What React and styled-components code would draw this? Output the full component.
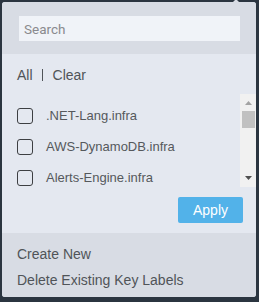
import React, { useEffect, useRef } from "react";
import styled, { createGlobalStyle } from "styled-components";

const Global = createGlobalStyle`
  html, body { margin: 0; padding: 0; }
  body {
    background: #2b3540;
    font-family: "Liberation Sans", Arial, sans-serif;
  }
  #root { padding: 2px 3px 0 2px; }
`;

const Popup = styled.div`
  position: relative;
  width: 254px;
  border-radius: 3px;
  background: #e4e8f0;
  overflow: visible;
  &::before {
    content: "";
    position: absolute;
    top: -3px;
    right: 17px;
    border-left: 3px solid transparent;
    border-right: 3px solid transparent;
    border-bottom: 3px solid #d8dce4;
  }
`;

const SearchSection = styled.div`
  background: #d8dce4;
  border-radius: 3px 3px 0 0;
  padding: 14px 16px 13px 17px;
`;

const SearchInput = styled.input`
  display: block;
  box-sizing: border-box;
  width: 221px;
  height: 25px;
  border: none;
  outline: none;
  background: #f0f3f8;
  padding: 0 0 0 5px;
  font-family: Roboto, "Liberation Sans", sans-serif;
  font-size: 13.5px;
  color: #333;
  caret-color: #3434c4;
  &::placeholder { color: #8a8a8e; }
`;

const Body = styled.div`
  padding: 13px 0 10px 0;
  display: flex;
  flex-direction: column;
`;

const LinkRow = styled.div`
  display: flex;
  align-items: center;
  padding-left: 15px;
  height: 16px;
  font-size: 14px;
  line-height: 16px;
  color: #505458;
`;

const LinkText = styled.span`
  cursor: pointer;
`;

const Divider = styled.span`
  width: 1px;
  height: 12px;
  background: #505458;
  margin: 0 10px 0 9px;
`;

const ListArea = styled.div`
  margin-top: 11px;
  height: 93px;
  display: flex;
`;

const List = styled.div`
  flex: 1;
  overflow: hidden;
  padding: 6px 0 0 15px;
`;

const Row = styled.label`
  display: flex;
  align-items: center;
  height: 31px;
  gap: 13px;
  font-size: 13px;
  color: #55585c;
`;

const Box = styled.span`
  box-sizing: border-box;
  width: 16px;
  height: 16px;
  border: 1.5px solid #3d3f42;
  border-radius: 3px;
  flex: none;
`;

const Track = styled.div`
  width: 16px;
  background: #f1f1f1;
  display: flex;
  flex-direction: column;
  align-items: center;
`;

const Arrow = styled.svg`
  display: block;
  width: 7px;
  height: 4px;
  margin: ${(p) => p.$m};
`;

const Thumb = styled.div`
  width: 13px;
  height: 17px;
  margin-left: 1px;
  background: #c1c1c1;
`;

const Spacer = styled.div`
  flex: 1;
`;

const Actions = styled.div`
  display: flex;
  justify-content: flex-end;
  padding-right: 13px;
  margin-top: 10px;
`;

const ApplyButton = styled.button`
  width: 65px;
  height: 26px;
  border: none;
  border-radius: 2px;
  background: #52b2e9;
  color: #fff;
  font-family: "Liberation Sans", Arial, sans-serif;
  font-size: 14px;
  padding: 0;
`;

const Footer = styled.div`
  background: #d8dce4;
  border-radius: 0 0 3px 3px;
  padding: 13px 0 9px 15px;
  display: flex;
  flex-direction: column;
  gap: 10px;
`;

const FooterLink = styled.div`
  font-size: 14px;
  line-height: 16px;
  color: #505458;
`;

const items = [".NET-Lang.infra", "AWS-DynamoDB.infra", "Alerts-Engine.infra"];

export default function App() {
  const ref = useRef(null);
  useEffect(() => {
    if (ref.current) ref.current.focus();
  }, []);
  return (
    <>
      <Global />
      <Popup>
        <SearchSection>
          <SearchInput ref={ref} placeholder="Search" autoFocus />
        </SearchSection>
        <Body>
          <LinkRow>
            <LinkText>All</LinkText>
            <Divider />
            <LinkText>Clear</LinkText>
          </LinkRow>
          <ListArea>
            <List>
              {items.map((t) => (
                <Row key={t}>
                  <Box />
                  {t}
                </Row>
              ))}
            </List>
            <Track>
              <Arrow $m="7px 0 6px 0" viewBox="0 0 7 4">
                <path d="M0 4 L3.5 0 L7 4 Z" fill="#a3a3a3" />
              </Arrow>
              <Thumb />
              <Spacer />
              <Arrow $m="0 0 7px 0" viewBox="0 0 7 4">
                <path d="M0 0 L7 0 L3.5 4 Z" fill="#505050" />
              </Arrow>
            </Track>
          </ListArea>
          <Actions>
            <ApplyButton>Apply</ApplyButton>
          </Actions>
        </Body>
        <Footer>
          <FooterLink>Create New</FooterLink>
          <FooterLink>Delete Existing Key Labels</FooterLink>
        </Footer>
      </Popup>
    </>
  );
}
